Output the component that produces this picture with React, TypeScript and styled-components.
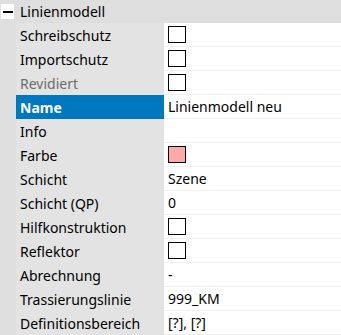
import React from "react";
import styled, { createGlobalStyle } from "styled-components";

const Global = createGlobalStyle`
  html, body { margin: 0; padding: 0; background: #ffffff; }
  body { font-family: "Noto Sans", "Open Sans", sans-serif; }
`;

const Grid = styled.div`
  width: 341px;
  display: flex;
  flex-direction: column;
  background: #dedede;
  font-family: "Noto Sans", sans-serif;
  font-size: 14px;
  color: #000;
`;

const Header = styled.div`
  height: 23px;
  display: flex;
  align-items: center;
  background: #dedede;
`;

const Toggle = styled.div`
  width: 13px;
  height: 15px;
  margin-left: 1px;
  margin-right: 6px;
  background: #fff;
  display: flex;
  align-items: center;
  justify-content: center;
  &::after {
    content: "";
    width: 10px;
    height: 2px;
    background: #000;
  }
`;

const HeaderText = styled.span`
  line-height: 23px;
`;

const Row = styled.div`
  height: 24px;
  display: grid;
  grid-template-columns: 16px 148px 1fr;
`;

const Indent = styled.div`
  background: #dedede;
`;

const Label = styled.div<{ $selected?: boolean; $muted?: boolean }>`
  background: ${(p) => (p.$selected ? "#0078c0" : "#e3e3e3")};
  color: ${(p) => (p.$selected ? "#fff" : p.$muted ? "#6d6d6d" : "#000")};
  font-weight: ${(p) => (p.$selected ? 700 : 400)};
  padding-left: 4px;
  display: flex;
  align-items: center;
  white-space: nowrap;
`;

const Value = styled.div`
  background: #fff;
  border-bottom: 1px solid #f0f0f0;
  padding-left: 4px;
  display: flex;
  align-items: center;
  white-space: nowrap;
`;

const Box = styled.div<{ $fill?: string }>`
  width: 18px;
  height: 17px;
  box-sizing: border-box;
  border: 1px solid #000;
  background: ${(p) => p.$fill ?? "#fff"};
`;

type Item = {
  label: string;
  kind: "check" | "text" | "color";
  value?: string;
  selected?: boolean;
  muted?: boolean;
};

const items: Item[] = [
  { label: "Schreibschutz", kind: "check" },
  { label: "Importschutz", kind: "check" },
  { label: "Revidiert", kind: "check", muted: true },
  { label: "Name", kind: "text", value: "Linienmodell neu", selected: true },
  { label: "Info", kind: "text", value: "" },
  { label: "Farbe", kind: "color", value: "#ffaaaa" },
  { label: "Schicht", kind: "text", value: "Szene" },
  { label: "Schicht (QP)", kind: "text", value: "0" },
  { label: "Hilfkonstruktion", kind: "check" },
  { label: "Reflektor", kind: "check" },
  { label: "Abrechnung", kind: "text", value: "-" },
  { label: "Trassierungslinie", kind: "text", value: "999_KM" },
  { label: "Definitionsbereich", kind: "text", value: "[?], [?]" },
];

export default function App() {
  return (
    <>
      <Global />
      <Grid>
        <Header>
          <Toggle />
          <HeaderText>Linienmodell</HeaderText>
        </Header>
        {items.map((it) => (
          <Row key={it.label}>
            <Indent />
            <Label $selected={it.selected} $muted={it.muted}>
              {it.label}
            </Label>
            <Value>
              {it.kind === "check" && <Box />}
              {it.kind === "color" && <Box $fill={it.value} />}
              {it.kind === "text" && it.value}
            </Value>
          </Row>
        ))}
      </Grid>
    </>
  );
}
